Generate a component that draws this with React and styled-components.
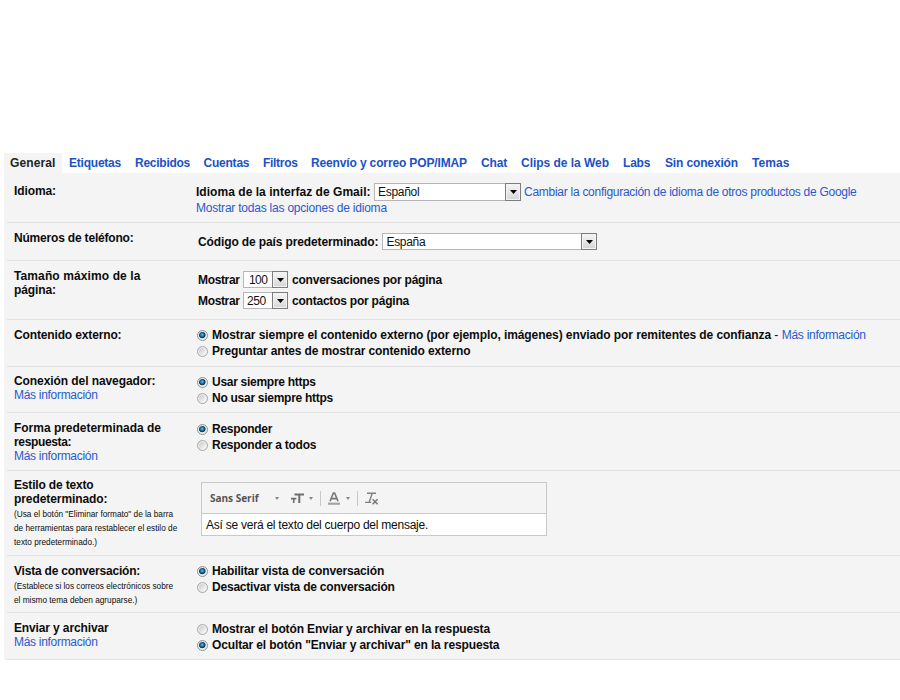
import React from 'react';
import styled, { createGlobalStyle, css } from 'styled-components';

const GlobalStyle = createGlobalStyle`
  * { box-sizing: border-box; }
  body {
    margin: 0;
    background: #fff;
    color: #0c0c0c;
    font: 12px/14px "Liberation Sans", Arial, sans-serif;
    overflow: hidden;
  }
`;

const Page = styled.main`
  height: 700px;
  padding: 153px 0 0 4px;
  overflow: hidden;
`;

const TabBar = styled.nav`
  display: flex;
  height: 20px;
`;

const Tab = styled.a`
  flex: none;
  width: ${(p) => p.$width}px;
  line-height: 20px;
  font-weight: bold;
  white-space: nowrap;
  color: #1c51c6;
  letter-spacing: ${(p) => p.$track || 0}px;
  ${(p) =>
    p.$active &&
    css`
      color: #222;
      background: #f4f4f4;
      padding-left: 6px;
      margin-right: 7px;
    `}
`;

const Panel = styled.section`
  background: #f4f4f4;
  padding-left: 3px;
`;

const Row = styled.div`
  display: grid;
  grid-template-columns: 182px 1fr;
  height: ${(p) => p.$height}px;
  padding: ${(p) => p.$top}px 0 0 7px;
  border-bottom: 1px solid #e2e2e2;
`;

const LabelCell = styled.div`
  display: flex;
  flex-direction: column;
  align-items: flex-start;
`;

const Text = styled.span`
  font-weight: ${(p) => (p.$plain ? 'normal' : 'bold')};
  letter-spacing: ${(p) => p.$track || 0}px;
  white-space: pre;
`;

const Link = styled.a`
  color: #2b59cc;
  white-space: pre;
  letter-spacing: ${(p) => p.$track || 0}px;
`;

const Hint = styled.small`
  margin-top: 2px;
  font-size: 8.25px;
  line-height: 14px;
  white-space: pre;
`;

const Field = styled.div`
  padding-left: ${(p) => p.$indent || 0}px;
  margin-top: ${(p) => p.$shift || 0}px;
`;

const Choices = styled.div`
  padding-left: 1px;
  margin-top: ${(p) => p.$shift || 0}px;
`;

const Line = styled.div`
  display: flex;
  align-items: center;
  height: ${(p) => p.$height || 16}px;
  line-height: 16px;
  gap: ${(p) => p.$gap || 0}px;
`;

const SecondLine = styled(Line)`
  margin-top: 4px;
`;

const ShowWord = styled(Text)`
  width: 45px;
`;

const Tail = styled(Text)`
  margin-left: 4px;
`;

const LanguageCaption = styled(Text)`
  width: 178px;
`;

const LanguageLink = styled(Link)`
  margin-left: 3px;
`;

const SelectBox = styled.div`
  display: flex;
  flex: none;
  width: ${(p) => p.$width}px;
  height: ${(p) => p.$height || 17}px;
  border: 1px solid #b4b6ba;
  background: #fff;
`;

const SelectValue = styled.span`
  flex: 1;
  padding-left: ${(p) => p.$pad || 3}px;
  line-height: 16px;
  letter-spacing: ${(p) => p.$track || -0.3}px;
  color: #111;
`;

const SelectButton = styled.span`
  display: grid;
  place-items: center;
  flex: none;
  width: 16px;
  margin: -1px;
  border: 1px solid #7c7d7f;
  background: linear-gradient(#f5f5f5, #e7e7e7 50%, #d5d5d5);
  box-shadow: inset 0 0 0 1px #f3f3f3;
`;

const Radio = styled.span`
  flex: none;
  width: 11px;
  height: 11px;
  margin-right: 4px;
  border: 1px solid ${(p) => (p.$checked ? '#8f9498' : '#a6a8aa')};
  border-radius: 50%;
  background: ${(p) =>
    p.$checked
      ? 'radial-gradient(circle at 46% 42%, #6cc4ea 0, #1f7eb0 1.5px, #12334f 3px, #e6eaec 3.9px)'
      : 'linear-gradient(135deg, #c9cbcd 15%, #f6f6f6 80%)'};
  box-shadow: inset 0 0 0 1px #f0f0f0;
`;

const Editor = styled.div`
  width: 346px;
  border: 1px solid #c9c9c9;
`;

const Toolbar = styled.div`
  display: flex;
  align-items: center;
  height: 31px;
  padding-left: 8px;
  border-bottom: 1px solid #c9c9c9;
`;

const FontName = styled.span`
  width: 65px;
  font: bold 10px/14px "Open Sans", sans-serif;
  color: #555;
`;

const Caret = styled.i`
  flex: none;
  border: solid transparent;
  border-width: 3px 2.5px 0;
  border-top-color: #858585;
  margin-right: ${(p) => p.$after || 0}px;
`;

const Separator = styled.i`
  flex: none;
  width: 1px;
  height: 15px;
  background: #c8c8c8;
  margin: 0 7px;
`;

const Icon = styled.svg`
  flex: none;
  display: block;
  margin-right: ${(p) => p.$after || 0}px;
`;

const Sample = styled.div`
  height: 21px;
  padding-left: 4px;
  line-height: 22px;
  background: #fff;
  letter-spacing: -0.245px;
  white-space: pre;
`;

const tabs = [
  ['General', 58, 0.12],
  ['Etiquetas', 66, -0.22],
  ['Recibidos', 68.5, -0.26],
  ['Cuentas', 59.5, -0.22],
  ['Filtros', 48, -0.3],
  ['Reenvío y correo POP/IMAP', 170, -0.14],
  ['Chat', 40, -0.17],
  ['Clips de la Web', 102, -0.03],
  ['Labs', 42, -0.2],
  ['Sin conexión', 87, -0.14],
  ['Temas', 38, 0.07],
];

function Select({ value, width, height, pad, track }) {
  return (
    <SelectBox $width={width} $height={height}>
      <SelectValue $pad={pad} $track={track}>{value}</SelectValue>
      <SelectButton>
        <svg width="7" height="4" viewBox="0 0 7 4">
          <path d="M0 0h7L3.5 4z" fill="#080808" />
        </svg>
      </SelectButton>
    </SelectBox>
  );
}

function Option({ checked, text, track, children }) {
  return (
    <Line>
      <Radio $checked={checked} />
      <Text $track={track}>{text}</Text>
      {children}
    </Line>
  );
}

function Setting({ height, top, labels, link, hints = [], children }) {
  return (
    <Row $height={height} $top={top}>
      <LabelCell>
        {labels.map(([text, track]) => (
          <Text key={text} $track={track}>{text}</Text>
        ))}
        {link && <Link $track={-0.3}>Más información</Link>}
        {hints.length > 0 && <Hint>{hints.join('\n')}</Hint>}
      </LabelCell>
      {children}
    </Row>
  );
}

export default function App() {
  return (
    <Page>
      <GlobalStyle />
      <TabBar>
        {tabs.map(([name, width, track], i) => (
          <Tab key={name} $width={width} $track={track} $active={i === 0}>{name}</Tab>
        ))}
      </TabBar>
      <Panel>
        <Setting height={50} top={11} labels={[['Idioma:', -0.1]]}>
          <Field $shift={-1}>
            <Line $height={18}>
              <LanguageCaption $track={0.04}>Idioma de la interfaz de Gmail:</LanguageCaption>
              <Select value="Español" width={147} height={18} />
              <LanguageLink $track={-0.27}>
                Cambiar la configuración de idioma de otros productos de Google
              </LanguageLink>
            </Line>
            <Line $height={14}>
              <Link $track={-0.22}>Mostrar todas las opciones de idioma</Link>
            </Line>
          </Field>
        </Setting>
        <Setting height={38} top={8} labels={[['Números de teléfono:', -0.19]]}>
          <Field $indent={2} $shift={2}>
            <Line $height={17} $gap={4}>
              <Text $track={-0.12}>Código de país predeterminado:</Text>
              <Select value="España" width={215} />
            </Line>
          </Field>
        </Setting>
        <Setting height={59} top={8} labels={[['Tamaño máximo de la', 0.11], ['página:', -0.1]]}>
          <Field $indent={2} $shift={2}>
            <Line $height={17}>
              <ShowWord $track={-0.35}>Mostrar</ShowWord>
              <Select value="100" width={45} pad={5} track={-0.6} />
              <Tail $track={-0.22}>conversaciones por página</Tail>
            </Line>
            <SecondLine $height={17}>
              <ShowWord $track={-0.35}>Mostrar</ShowWord>
              <Select value="250" width={45} track={-0.4} />
              <Tail $track={-0.22}>contactos por página</Tail>
            </SecondLine>
          </Field>
        </Setting>
        <Setting height={47} top={8} labels={[['Contenido externo:', -0.14]]}>
          <Choices $shift={-1}>
            <Option
              checked
              track={-0.081}
              text="Mostrar siempre el contenido externo (por ejemplo, imágenes) enviado por remitentes de confianza"
            >
              <Text $plain> - </Text>
              <Link $track={-0.27}>Más información</Link>
            </Option>
            <Option track={-0.13} text="Preguntar antes de mostrar contenido externo" />
          </Choices>
        </Setting>
        <Setting height={46} top={7} labels={[['Conexión del navegador:', -0.08]]} link>
          <Choices>
            <Option checked track={-0.28} text="Usar siempre https" />
            <Option track={-0.27} text="No usar siempre https" />
          </Choices>
        </Setting>
        <Setting
          height={58}
          top={8}
          labels={[['Forma predeterminada de', -0.02], ['respuesta:', -0.35]]}
          link
        >
          <Choices>
            <Option checked track={-0.28} text="Responder" />
            <Option track={-0.27} text="Responder a todos" />
          </Choices>
        </Setting>
        <Setting
          height={85}
          top={7}
          labels={[['Estilo de texto', -0.17], ['predeterminado:', -0.08]]}
          hints={[
            '(Usa el botón "Eliminar formato" de la barra',
            'de herramientas para restablecer el estilo de',
            'texto predeterminado.)',
          ]}
        >
          <Field $indent={5} $shift={4}>
            <Editor>
              <Toolbar>
                <FontName>Sans Serif</FontName>
                <Caret $after={12} />
                <Icon width="13" height="10" viewBox="0 0 13 10" $after={5}>
                  <path d="M3.5 1.5H13M8.3 1.5V10" fill="none" stroke="#6c6c6c" strokeWidth="2" />
                  <path d="M0 5.6h5.4M2.7 5.6V10" fill="none" stroke="#6c6c6c" strokeWidth="1.6" />
                </Icon>
                <Caret />
                <Separator />
                <Icon width="12" height="13" viewBox="0 0 12 13" $after={6}>
                  <path d="M2 9.3 5.4 1h1.2L10 9.3M3.4 6.6h5.2" fill="none" stroke="#777" strokeWidth="1.6" />
                  <path d="M0 10.6h12v2.2H0z" fill="#a3a3a3" />
                </Icon>
                <Caret />
                <Separator />
                <Icon width="14" height="13" viewBox="0 0 14 13">
                  <path d="M2 1.2h9M7.3 1.2 4.2 10M0 10.4h6.3" fill="none" stroke="#808080" strokeWidth="1.4" />
                  <path d="m7.6 7.3 5 4.9m0-4.9-5 4.9" fill="none" stroke="#777" strokeWidth="1.5" />
                </Icon>
              </Toolbar>
              <Sample>Así se verá el texto del cuerpo del mensaje.</Sample>
            </Editor>
          </Field>
        </Setting>
        <Setting
          height={57}
          top={8}
          labels={[['Vista de conversación:', -0.2]]}
          hints={['(Establece si los correos electrónicos sobre', 'el mismo tema deben agruparse.)']}
        >
          <Choices $shift={-1}>
            <Option checked track={-0.15} text="Habilitar vista de conversación" />
            <Option track={-0.21} text="Desactivar vista de conversación" />
          </Choices>
        </Setting>
        <Setting height={47} top={8} labels={[['Enviar y archivar', -0.13]]} link>
          <Choices>
            <Option track={-0.135} text="Mostrar el botón Enviar y archivar en la respuesta" />
            <Option checked track={-0.13} text={'Ocultar el botón "Enviar y archivar" en la respuesta'} />
          </Choices>
        </Setting>
      </Panel>
    </Page>
  );
}
